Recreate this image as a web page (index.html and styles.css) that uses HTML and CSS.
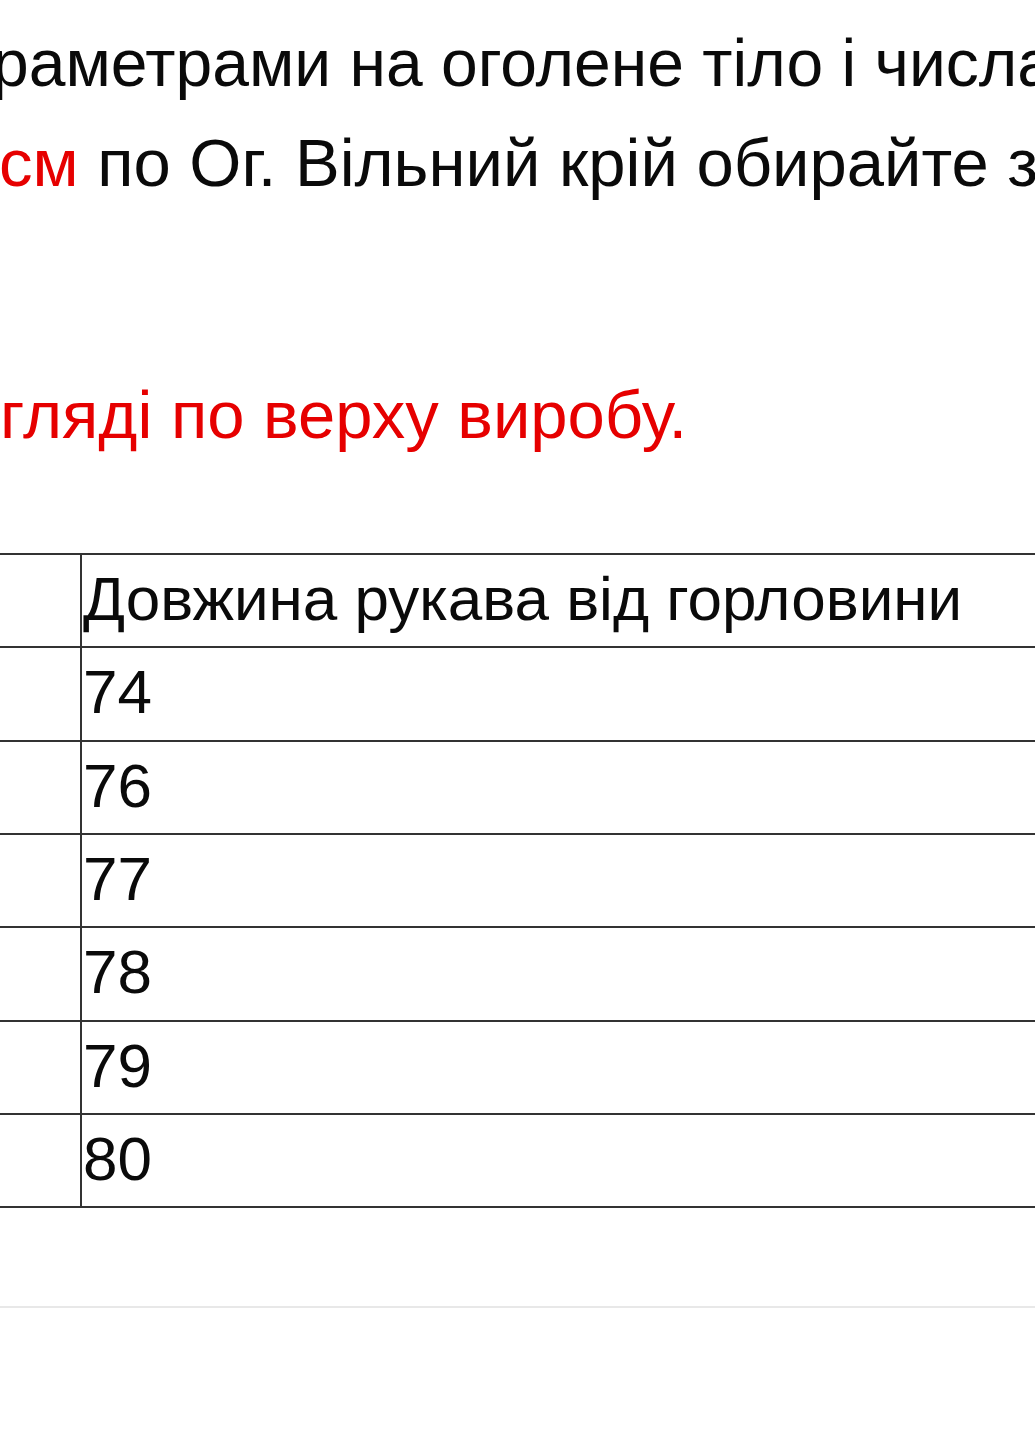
FILE: index.html
```html
<!DOCTYPE html>
<html lang="uk">
<head>
<meta charset="utf-8">
<title>Розмірна сітка</title>
<link rel="stylesheet" href="styles.css">
</head>
<body>
<main class="page">
  <p class="line line-first">раметрами на оголене тіло і числа</p>
  <p class="line line-second"><span class="accent">см</span> по Ог. Вільний крій обирайте з</p>
  <p class="line line-note accent">гляді по верху виробу.</p>

  <div class="size-table">
    <div class="row">
      <div class="cell cell-size"></div>
      <div class="cell cell-value">Довжина рукава від горловини</div>
    </div>
    <div class="row">
      <div class="cell cell-size"></div>
      <div class="cell cell-value">74</div>
    </div>
    <div class="row">
      <div class="cell cell-size"></div>
      <div class="cell cell-value">76</div>
    </div>
    <div class="row">
      <div class="cell cell-size"></div>
      <div class="cell cell-value">77</div>
    </div>
    <div class="row">
      <div class="cell cell-size"></div>
      <div class="cell cell-value">78</div>
    </div>
    <div class="row">
      <div class="cell cell-size"></div>
      <div class="cell cell-value">79</div>
    </div>
    <div class="row">
      <div class="cell cell-size"></div>
      <div class="cell cell-value">80</div>
    </div>
  </div>

  <div class="divider"></div>
</main>
</body>
</html>
```
FILE: styles.css
```css
html, body {
  margin: 0;
  padding: 0;
  background: #ffffff;
}

body {
  width: 1035px;
  height: 1440px;
  overflow: hidden;
  font-family: "Liberation Sans", Arial, sans-serif;
  color: #0a0a0a;
}

.page {
  display: flex;
  flex-direction: column;
  padding-top: 13px;
  overflow: hidden;
}

.line {
  margin: 0;
  font-size: 66px;
  line-height: 100px;
  height: 100px;
  white-space: nowrap;
}

.line-first {
  margin-left: -8px;
}

.line-second {
  font-size: 67px;
  margin-left: -1px;
}

.line-note {
  font-size: 67px;
  margin-top: 152px;
}

.accent {
  color: #e60000;
}

.size-table {
  margin-top: 88px;
  width: 1200px;
  border-top: 2px solid #333333;
  display: flex;
  flex-direction: column;
}

.row {
  display: grid;
  grid-template-columns: 80px 1fr;
  height: 93.33px;
  box-sizing: border-box;
  border-bottom: 2px solid #333333;
}

.cell {
  font-size: 62px;
  line-height: 72px;
  padding-top: 8px;
  white-space: nowrap;
}

.cell-value {
  border-left: 2px solid #333333;
  padding-left: 1px;
}

.divider {
  margin-top: 98px;
  height: 2px;
  background: #e8e8e8;
}
```
